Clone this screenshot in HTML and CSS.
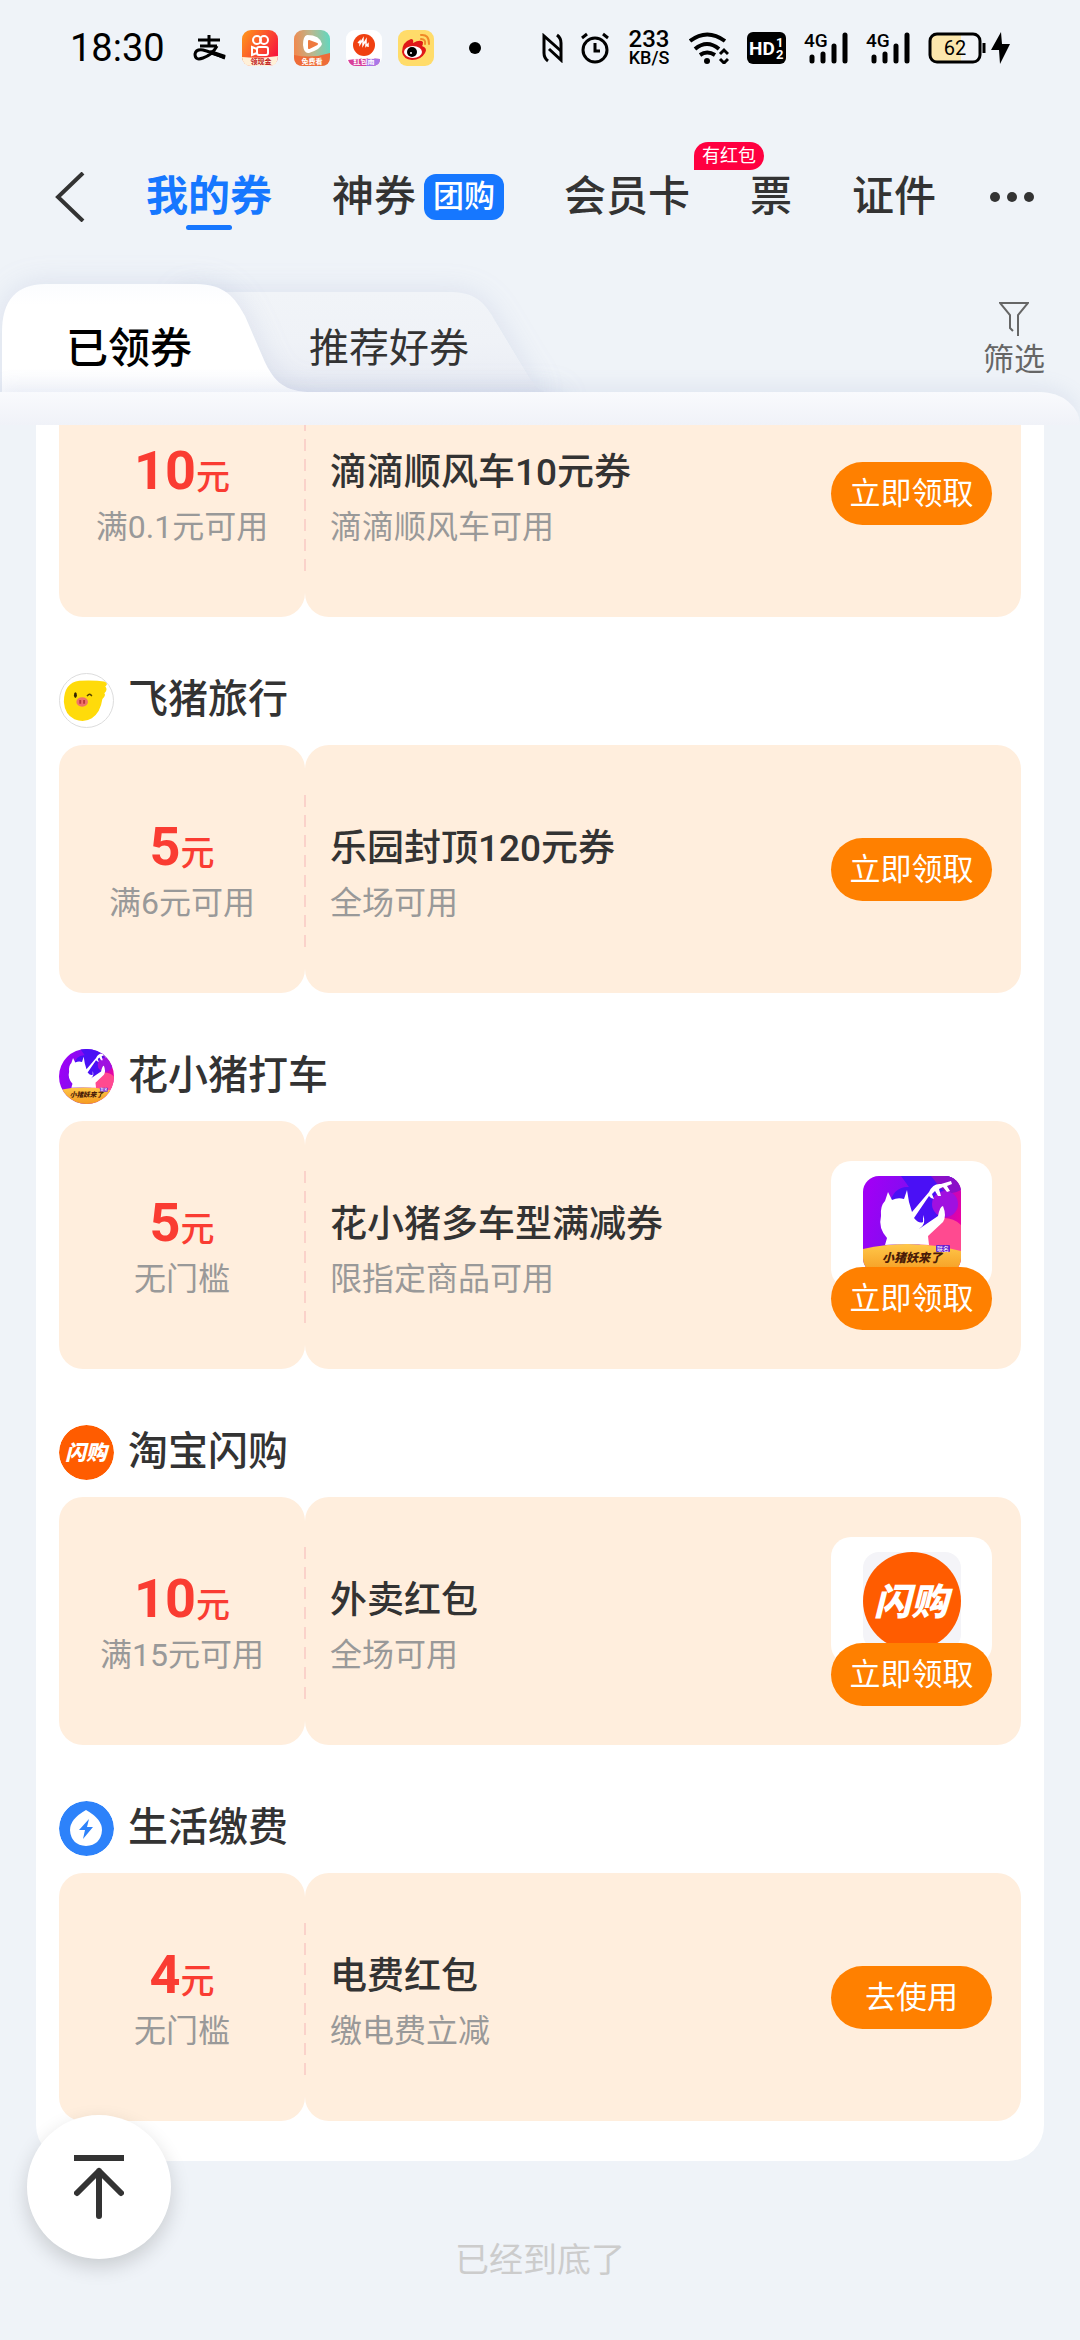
FILE: index.html
```html
<!DOCTYPE html>
<html lang="zh">

<head>
    <meta charset="UTF-8">
    <meta name="viewport" content="width=device-width, initial-scale=1.0">
    <title>我的券</title>
    <link rel="stylesheet" href="styles.css">
</head>

<body>
    <!-- 公用图形 -->
    <svg class="defs" width="0" height="0" aria-hidden="true">
        <defs>
            <linearGradient id="pigBg" x1="0" y1="0.3" x2="1" y2="0.6">
                <stop offset="0" stop-color="#a000f5" />
                <stop offset="0.5" stop-color="#7a10f0" />
                <stop offset="1" stop-color="#f5009a" />
            </linearGradient>
            <linearGradient id="pigHill" x1="0" y1="0" x2="0" y2="1">
                <stop offset="0" stop-color="#ffc84a" />
                <stop offset="1" stop-color="#f59a20" />
            </linearGradient>
        </defs>
        <symbol id="pig" viewBox="0 0 98 98">
            <rect width="98" height="98" fill="url(#pigBg)" />
            <path d="M38 0H90Q98 12 82 18Q88 34 68 46L48 58L26 30Q30 10 46 11Z" fill="#4a10f5" />
            <path d="M68 0H98V14Q84 22 76 10Z" fill="#8a10c8" />
            <circle cx="82" cy="28" r="13" fill="#a010e0" />
            <circle cx="81" cy="66" r="24" fill="#ff4a90" />
            <path d="M0 73Q48 62 98 75V98H0Z" fill="url(#pigHill)" />
            <path
                d="M25 16L29 24Q35 21 41 23L44 14L46 26L49 36L66 16Q70 7 78 8L88 5L89 8L84 10L87 15L84 16L80 11L76 13L78 20L75 20L72 15L69 18L71 23L68 22L66 20L51 42Q56 48 60 46L60 39Q64 48 56 53L75 40Q77 30 80 30Q84 40 80 46L65 60L66 69Q44 67 22 69L24 62Q15 52 18 40Q17 30 22 25Z"
                fill="#fff" />
            <rect x="73" y="69" width="14" height="7" rx="1" fill="#6a20d0" />
            <text x="80" y="75" class="pig-tag" text-anchor="middle">联名</text>
            <text x="49" y="86" class="pig-text" text-anchor="middle">小猪妖来了</text>
        </symbol>
        <symbol id="flash" viewBox="0 0 98 98">
            <circle cx="49" cy="49" r="49" fill="#ff5c00" />
            <text x="48" y="63" class="flash-text" text-anchor="middle">闪购</text>
        </symbol>
        <symbol id="signal" viewBox="0 0 44 32">
            <text x="0" y="15" class="signal-text">4G</text>
            <path d="M8 25V29M19 22V29M30 14V29M41 3V29" stroke="#000" stroke-width="5" stroke-linecap="round" />
        </symbol>
    </svg>

    <!-- 状态栏 -->
    <div class="status">
        <span class="time">18:30</span>
        <svg class="alipay" width="33" height="26" viewBox="0 0 33 26" fill="none" stroke="#000">
            <path d="M5 5H27M16 0V11M7 11H24" stroke-width="3" />
            <path d="M24 11Q19 20 10 23Q2 26 2 19Q3 14 10 15Q18 17 32 23" stroke-width="3" />
            <path d="M17 17L32 22" stroke-width="4" />
        </svg>
        <div class="apps">
            <svg width="36" height="36" viewBox="0 0 36 36">
                <defs>
                    <linearGradient id="ks" x1="0" y1="0" x2="1" y2="0.6">
                        <stop offset="0" stop-color="#ff9a1a" />
                        <stop offset="1" stop-color="#f8183c" />
                    </linearGradient>
                </defs>
                <rect width="36" height="36" rx="9" fill="url(#ks)" />
                <g fill="none" stroke="#fff" stroke-width="2">
                    <circle cx="15" cy="10" r="4" />
                    <circle cx="22" cy="10" r="4" />
                    <rect x="15" y="17" width="11" height="8" rx="2" />
                    <path d="M15 19L10 17V25L15 23" />
                </g>
                <path d="M0 27Q18 29 36 26Q36 36 27 36H9Q1 36 0 27Z" fill="#fff0d8" />
                <text x="19" y="34" class="app-text red" text-anchor="middle">领现金</text>
            </svg>
            <svg width="36" height="36" viewBox="0 0 36 36">
                <defs>
                    <linearGradient id="hb" x1="0" y1="0.3" x2="1" y2="0.2">
                        <stop offset="0" stop-color="#f08a50" />
                        <stop offset="0.5" stop-color="#b8b890" />
                        <stop offset="1" stop-color="#60d8c0" />
                    </linearGradient>
                </defs>
                <rect width="36" height="36" rx="9" fill="url(#hb)" />
                <path d="M0 25Q18 29 36 23V27Q36 36 27 36H9Q0 36 0 27Z" fill="#ee6c38" />
                <path d="M13 5Q9 6 9 15Q10 24 15 23Q27 19 28 14Q26 5 13 5Z" fill="#fff" />
                <path d="M15 11L23 14L15 18Z" fill="#ee7a40" stroke="#ee7a40" stroke-width="2" stroke-linejoin="round" />
                <text x="18" y="34" class="app-text" text-anchor="middle">免费看</text>
            </svg>
            <svg width="36" height="36" viewBox="0 0 36 36">
                <rect width="36" height="36" rx="9" fill="#fff" />
                <circle cx="18" cy="15" r="11" fill="#f04010" />
                <path d="M12 13L14 11V14L17 9V15L20 10V16L22 14V17" stroke="#fff" stroke-width="1.5" fill="none" />
                <path d="M2 30Q18 27 34 29Q34 36 26 36H10Q4 36 2 30Z" fill="#d8409a" />
                <path d="M20 29Q28 28 34 29Q34 36 26 36H20Z" fill="#a878e8" />
                <text x="18" y="34" class="app-text" text-anchor="middle">红包雨</text>
            </svg>
            <svg width="36" height="36" viewBox="0 0 36 36">
                <rect width="36" height="36" rx="9" fill="#ffdc6a" />
                <path d="M4 22Q4 12 13 9Q16 9 15 13Q22 9 25 12Q25 15 24 16Q30 18 27 23Q23 30 14 30Q5 29 4 22Z"
                    fill="#e01818" />
                <ellipse cx="15" cy="22" rx="9" ry="6" fill="#fff" />
                <circle cx="14" cy="22" r="5" fill="#000" />
                <circle cx="13" cy="23" r="1" fill="#fff" />
                <path d="M23 5Q31 4 31 14M23 9Q28 9 27 14" stroke="#f08a28" stroke-width="2" fill="none"
                    stroke-linecap="round" />
            </svg>
        </div>
        <span class="dot"></span>
        <div class="status-right">
            <svg width="21" height="30" viewBox="0 0 21 30" fill="none" stroke="#000" stroke-width="3">
                <path d="M6 28Q2 25 2 20V3L19 18" />
                <path d="M15 2Q19 5 19 10V27L7 16" />
            </svg>
            <svg width="28" height="32" viewBox="0 0 28 32" fill="none" stroke="#000" stroke-width="3">
                <circle cx="14" cy="18" r="12" />
                <path d="M14 11V19H19M1 6L6 2M27 6L22 2" />
            </svg>
            <div class="speed"><b>233</b><span>KB/S</span></div>
            <svg width="40" height="32" viewBox="0 0 40 32" fill="none" stroke="#000" stroke-width="4">
                <path d="M1 9Q18 -4 36 9M6 17Q18 7 30 17M11 23Q18 18 26 23" />
                <circle cx="18" cy="29" r="3" fill="#000" stroke="none" />
                <path d="M31 22L35 18L39 22M31 27L35 31L39 27" stroke-width="3" />
            </svg>
            <svg width="39" height="32" viewBox="0 0 39 32">
                <rect width="39" height="32" rx="6" />
                <text x="2" y="23" class="hd">HD</text>
                <text x="29" y="15" class="hd-small">1</text>
                <text x="29" y="27" class="hd-small">2</text>
            </svg>
            <svg width="44" height="32"><use href="#signal" /></svg>
            <svg width="44" height="32"><use href="#signal" /></svg>
            <svg width="82" height="32" viewBox="0 0 82 32">
                <rect x="2" y="2" width="50" height="28" rx="7" fill="#f2f4f8" />
                <path d="M9 2H33V30H9Q2 30 2 23V9Q2 2 9 2Z" fill="#fbe6ac" />
                <rect x="2" y="2" width="50" height="28" rx="7" fill="none" stroke="#000" stroke-width="3" />
                <path d="M56 11V21" stroke="#000" stroke-width="3" />
                <text x="27" y="23" class="battery" text-anchor="middle">62</text>
                <path d="M73 0L63 18H71L72 32L82 12H74Z" />
            </svg>
        </div>
    </div>

    <!-- 顶部导航 -->
    <header class="header">
        <button class="icon-btn" aria-label="返回">
            <svg width="31" height="50" viewBox="0 0 31 50" fill="none" stroke="#333" stroke-width="4">
                <path d="M28 1L3 25L28 49" />
            </svg>
        </button>
        <nav class="nav">
            <a href="#" class="active">我的券</a>
            <a href="#">神券<span class="badge">团购</span></a>
            <a href="#">会员卡<span class="tip">有红包</span></a>
            <a href="#">票</a>
            <a href="#">证件</a>
        </nav>
        <button class="icon-btn more" aria-label="更多">
            <svg width="44" height="12" viewBox="0 0 44 12" fill="#333">
                <circle cx="5" cy="6" r="5" />
                <circle cx="22" cy="6" r="5" />
                <circle cx="39" cy="6" r="5" />
            </svg>
        </button>
    </header>

    <!-- 标签页 -->
    <div class="tabs">
        <svg class="tabs-bg" width="560" height="141" viewBox="0 0 560 141">
            <defs>
                <linearGradient id="tabOn" gradientUnits="userSpaceOnUse" x1="0" y1="0" x2="0" y2="141">
                    <stop offset="0" stop-color="#fbfcfe" />
                    <stop offset="0.15" stop-color="#fff" />
                    <stop offset="0.6" stop-color="#fff" />
                    <stop offset="0.77" stop-color="#f9fafd" />
                    <stop offset="1" stop-color="#f0f2f8" />
                </linearGradient>
                <linearGradient id="tabOff" x1="0" y1="0" x2="0" y2="1">
                    <stop offset="0" stop-color="#f1f4f8" />
                    <stop offset="0.5" stop-color="#eff2f7" />
                    <stop offset="1" stop-color="#e9ecf4" />
                </linearGradient>
            </defs>
            <path class="shape" d="M180 8H451C478 8 487 22 497 40L527 90Q534 103 545 108H180Z" fill="url(#tabOff)" />
            <path class="shape"
                d="M2 141V48Q2 0 46 0H196C225 0 235 14 245 32L264 76C274 98 285 108 312 108H560V141Z"
                fill="url(#tabOn)" />
        </svg>
        <div class="tab-row">
            <button class="tab on">已领券</button>
            <button class="tab">推荐好券</button>
            <button class="filter">
                <svg width="30" height="34" viewBox="0 0 30 34" fill="none" stroke="#666" stroke-width="2">
                    <path d="M14 29L11 26V13L1 1H29L19 13V34" />
                </svg>
                筛选
            </button>
        </div>
        <div class="strip"></div>
    </div>

    <!-- 券列表 -->
    <main class="scroller">
        <div class="list">
            <section class="coupon">
                <div class="price">
                    <p class="money"><b>10</b>元</p>
                    <p class="note">满0.1元可用</p>
                </div>
                <div class="info">
                    <div class="text">
                        <h3>滴滴顺风车10元券</h3>
                        <p class="note">滴滴顺风车可用</p>
                    </div>
                    <div class="action"><button class="get">立即领取</button></div>
                </div>
            </section>

            <h2 class="shop">
                <svg class="logo line" viewBox="0 0 55 55">
                    <path d="M4 29Q4 9 20 7Q34 6 48 8Q50 10 47 13Q50 16 46 20Q48 22 44 26Q42 40 33 46Q25 51 15 47Q5 42 4 29Z"
                        fill="#ffdb0a" />
                    <ellipse cx="23" cy="29" rx="6" ry="5" fill="#f0736a" />
                    <path d="M21 27V31M25 27V31" stroke="#b83a3a" stroke-width="2" />
                    <ellipse cx="16" cy="22" rx="1.5" ry="3" fill="#332200" />
                    <path d="M28 23Q31 19 33 23" stroke="#554400" stroke-width="1.5" fill="none" />
                </svg>
                飞猪旅行
            </h2>
            <section class="coupon">
                <div class="price">
                    <p class="money"><b>5</b>元</p>
                    <p class="note">满6元可用</p>
                </div>
                <div class="info">
                    <div class="text">
                        <h3>乐园封顶120元券</h3>
                        <p class="note">全场可用</p>
                    </div>
                    <div class="action"><button class="get">立即领取</button></div>
                </div>
            </section>

            <h2 class="shop"><svg class="logo"><use href="#pig" /></svg>花小猪打车</h2>
            <section class="coupon">
                <div class="price">
                    <p class="money"><b>5</b>元</p>
                    <p class="note">无门槛</p>
                </div>
                <div class="info">
                    <div class="text">
                        <h3>花小猪多车型满减券</h3>
                        <p class="note">限指定商品可用</p>
                    </div>
                    <div class="action">
                        <div class="pic"><svg><use href="#pig" /></svg></div>
                        <button class="get">立即领取</button>
                    </div>
                </div>
            </section>

            <h2 class="shop"><svg class="logo"><use href="#flash" /></svg>淘宝闪购</h2>
            <section class="coupon">
                <div class="price">
                    <p class="money"><b>10</b>元</p>
                    <p class="note">满15元可用</p>
                </div>
                <div class="info">
                    <div class="text">
                        <h3>外卖红包</h3>
                        <p class="note">全场可用</p>
                    </div>
                    <div class="action">
                        <div class="pic"><svg><use href="#flash" /></svg></div>
                        <button class="get">立即领取</button>
                    </div>
                </div>
            </section>

            <h2 class="shop">
                <svg class="logo" viewBox="0 0 55 55">
                    <circle cx="27.5" cy="27.5" r="27.5" fill="#2d82fa" />
                    <path d="M27 9Q43 18 43 29Q42 44 27 45Q12 44 11 29Q11 18 27 9Z" fill="#fff" />
                    <path d="M30 18L20 29H26L24 38L34 26H28Z" fill="#2d82fa" />
                </svg>
                生活缴费
            </h2>
            <section class="coupon">
                <div class="price">
                    <p class="money"><b>4</b>元</p>
                    <p class="note">无门槛</p>
                </div>
                <div class="info">
                    <div class="text">
                        <h3>电费红包</h3>
                        <p class="note">缴电费立减</p>
                    </div>
                    <div class="action"><button class="get">去使用</button></div>
                </div>
            </section>
        </div>
    </main>

    <p class="end">已经到底了</p>
    <div class="gesture"><i></i><i></i><i></i></div>

    <button class="to-top" aria-label="回到顶部">
        <svg width="50" height="66" viewBox="0 0 50 66" fill="none" stroke="#333" stroke-width="6">
            <path d="M0 4H50" />
            <path d="M25 62V17M3 39L25 17L47 39" stroke-linecap="round" stroke-linejoin="round" />
        </svg>
    </button>
</body>

</html>
```

FILE: styles.css
```css
* {
    box-sizing: border-box;
    margin: 0;
    padding: 0;
}

body {
    font-family: Roboto, "Noto Sans CJK SC", sans-serif;
    background: #eff3f8;
    color: #333;
    min-height: 100vh;
    display: flex;
    flex-direction: column;
    overflow-x: hidden;
}

button {
    font: inherit;
    color: inherit;
    border: none;
    background: none;
}

svg {
    display: block;
    flex-shrink: 0;
}

.defs {
    position: absolute;
}

/* 状态栏 */
.status {
    height: 96px;
    padding: 0 70px;
    display: flex;
    align-items: center;
    color: #000;
}

.time {
    font-size: 38px;
    line-height: 44px;
}

.alipay {
    margin-left: 28px;
}

.apps {
    display: flex;
    gap: 16px;
    margin-left: 16px;
}

.app-text {
    font-size: 7px;
    font-weight: bold;
    fill: #fff;
}

.app-text.red {
    fill: #c01818;
}

.dot {
    width: 12px;
    height: 12px;
    margin-left: 35px;
    border-radius: 50%;
    background: #000;
}

.status-right {
    display: flex;
    align-items: center;
    gap: 18px;
    margin-left: auto;
}

.speed {
    width: 44px;
    text-align: center;
}

.speed b,
.speed span {
    display: block;
    font-size: 24px;
    line-height: 20px;
    font-weight: 500;
}

.speed span {
    font-size: 18px;
    line-height: 18px;
}

.signal-text {
    font-size: 19px;
    font-weight: 500;
}

.hd {
    font-size: 19px;
    font-weight: bold;
    fill: #fff;
}

.hd-small {
    font-size: 13px;
    font-weight: bold;
    fill: #fff;
}

.battery {
    font-size: 20px;
}

/* 顶部导航 */
.header {
    height: 188px;
    padding: 14px 46px 0 55px;
    display: flex;
    align-items: center;
}

.nav {
    display: flex;
    gap: 60px;
    margin-left: 60px;
    font-size: 42px;
    line-height: 60px;
    font-weight: 500;
    white-space: nowrap;
}

.nav a {
    position: relative;
    display: flex;
    align-items: center;
    color: #333;
    text-decoration: none;
}

.nav .active {
    color: #1677ff;
    font-weight: bold;
}

.nav .active::after {
    content: "";
    position: absolute;
    left: 50%;
    bottom: -3px;
    width: 46px;
    height: 5px;
    margin-left: -23px;
    border-radius: 3px;
    background: #1677ff;
}

.badge {
    margin-left: 8px;
    padding: 0 9px;
    border-radius: 12px;
    background: #1677ff;
    color: #fff;
    font-size: 31px;
    line-height: 46px;
}

.tip {
    position: absolute;
    left: 100%;
    top: -25px;
    margin-left: 4px;
    padding: 0 8px;
    border-radius: 14px 14px 14px 0;
    background: #ff0040;
    color: #fff;
    font-size: 18px;
    line-height: 28px;
    font-weight: normal;
}

.more {
    margin-left: auto;
}

/* 标签页 */
.tabs {
    position: relative;
}

.tabs-bg {
    position: absolute;
    left: 0;
    top: 0;
    overflow: visible;
    clip-path: inset(-60px -60px 0 -10px);
}

.shape {
    filter: drop-shadow(0 0 14px rgba(120, 140, 190, 0.18));
}

.tab-row {
    position: relative;
    z-index: 1;
    height: 108px;
    padding: 18px 35px 0 66px;
    display: flex;
    align-items: center;
}

.tab {
    padding-top: 4px;
    margin-right: 117px;
    font-size: 40px;
    line-height: 60px;
}

.tab.on {
    font-size: 42px;
    font-weight: 500;
    color: #000;
}

.filter {
    align-self: flex-start;
    margin-left: auto;
    display: flex;
    flex-direction: column;
    align-items: center;
    gap: 4px;
    font-size: 31px;
    line-height: 40px;
    color: #666;
}

.strip {
    height: 33px;
    border-top-right-radius: 40px 33px;
    background: linear-gradient(#f9fafd, #f0f2f8);
    box-shadow: 0 -4px 20px rgba(120, 140, 190, 0.14);
    clip-path: inset(-40px 0 0 0);
}

/* 券列表 */
.scroller {
    margin: 0 36px;
    overflow: hidden;
    border-radius: 0 0 36px 36px;
    background: #fff;
}

/* 第一张券已滚动出一部分 */
.list {
    margin-top: -56px;
    padding: 0 23px 40px;
}

.shop {
    height: 128px;
    padding-top: 38px;
    display: flex;
    align-items: center;
    gap: 14px;
    font-size: 40px;
    line-height: 60px;
    font-weight: 500;
}

.logo {
    width: 55px;
    height: 55px;
    border-radius: 50%;
}

.line {
    border: 1px solid #ddd;
}

.coupon {
    position: relative;
    height: 248px;
    display: flex;
}

.coupon::after {
    content: "";
    position: absolute;
    left: 245px;
    top: 50px;
    width: 2px;
    height: 155px;
    background: repeating-linear-gradient(#fad2ca 0 12px, transparent 12px 20px);
}

.price,
.info {
    border-radius: 24px;
    background: #ffeedd;
}

.price {
    width: 246px;
    padding-top: 74px;
    text-align: center;
}

.money {
    font-size: 34px;
    line-height: 56px;
    font-weight: 500;
    color: #fa3c32;
}

.money b {
    font-size: 54px;
}

.note {
    font-size: 32px;
    line-height: 44px;
    color: #999;
}

.info {
    flex: 1;
    padding: 0 29px 0 25px;
    display: flex;
    justify-content: space-between;
    align-items: center;
}

.text {
    align-self: flex-start;
    padding-top: 74px;
}

.text h3 {
    margin-bottom: 2px;
    font-size: 37px;
    line-height: 60px;
    font-weight: 500;
}

.action {
    width: 161px;
}

.get {
    position: relative;
    display: block;
    width: 100%;
    border-radius: 32px;
    background: #ff8000;
    color: #fff;
    font-size: 31px;
    line-height: 63px;
}

.pic {
    height: 128px;
    margin-bottom: -22px;
    padding-top: 15px;
    border-radius: 20px;
    background: #fff;
}

.pic svg {
    width: 98px;
    height: 98px;
    margin: 0 auto;
    border-radius: 16px;
    background: #f4f4f8;
}

.pig-text {
    font-size: 12px;
    font-weight: 900;
    font-style: italic;
    fill: #4a1c08;
}

.pig-tag {
    font-size: 6px;
    fill: #fff;
}

.flash-text {
    font-size: 37px;
    font-weight: 900;
    font-style: italic;
    fill: #fff;
}

/* 底部 */
.end {
    padding: 74px 0;
    text-align: center;
    font-size: 34px;
    line-height: 50px;
    color: #ccc;
}

.gesture {
    display: flex;
    gap: 2px;
    width: 67%;
    height: 9px;
    margin: auto auto 0;
    border-radius: 5px;
    overflow: hidden;
    background: #fff;
}

.gesture i {
    flex: 1;
    background: #cbccd0;
}

.to-top {
    position: fixed;
    left: 27px;
    bottom: 81px;
    width: 144px;
    height: 144px;
    display: flex;
    justify-content: center;
    align-items: center;
    border-radius: 50%;
    background: #fff;
    box-shadow: 0 8px 20px rgba(0, 0, 0, 0.16);
}
```
